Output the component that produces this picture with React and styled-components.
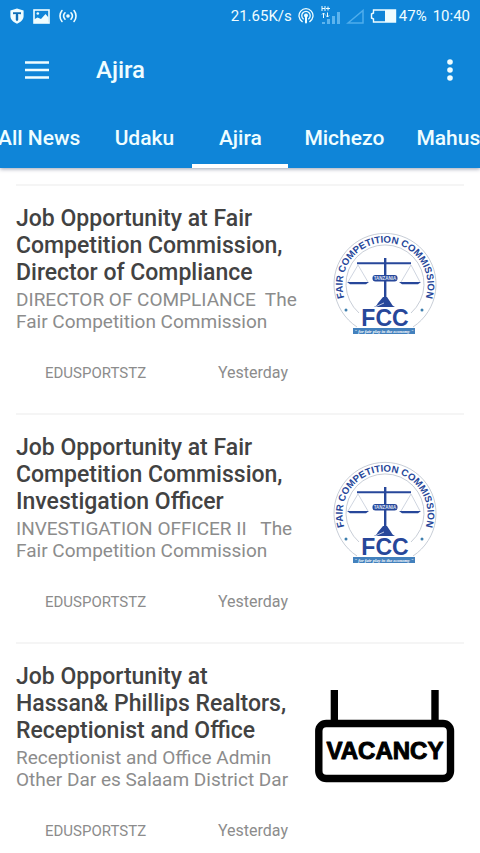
import React, { useId, useLayoutEffect, useRef, useState } from 'react';
import styled, { createGlobalStyle } from 'styled-components';

const GlobalStyle = createGlobalStyle`
  *, *::before, *::after { box-sizing: border-box; }
  body {
    margin: 0;
    background: #fff;
    font-family: Roboto, 'Noto Sans', sans-serif;
  }
  button { font: inherit; }
`;

const Screen = styled.div`
  display: flex;
  flex-direction: column;
  height: 100vh;
  overflow: hidden;
`;

const Header = styled.header`
  flex: none;
  z-index: 1;
  background: #0f85d8;
  color: #effdff;
  box-shadow: 0 1px 4px rgba(0, 20, 60, 0.4);
`;

const StatusBar = styled.div`
  display: flex;
  justify-content: space-between;
  align-items: center;
  height: 32px;
  padding: 0 10px;
  font-size: 15px;
  line-height: 18px;
`;

const StatusGroup = styled.div`
  display: flex;
  align-items: center;
  gap: ${(p) => p.$gap}px;
`;

const Glyph = styled.svg`
  display: block;
  flex: none;
`;

const Toolbar = styled.div`
  display: flex;
  align-items: center;
  height: 76px;
  padding: 0 14px 0 21px;
`;

const IconButton = styled.button`
  display: grid;
  place-items: center;
  width: 32px;
  height: 40px;
  padding: 0;
  border: 0;
  background: none;
  color: inherit;
  cursor: pointer;
`;

const AppTitle = styled.h1`
  flex: 1;
  margin: 0 0 0 43px;
  font-size: 24px;
  font-weight: 500;
  line-height: 32px;
`;

const TabStrip = styled.nav`
  position: relative;
  display: flex;
  height: 60px;
  overflow-x: auto;
  scrollbar-width: none;
`;

const Tab = styled.button`
  flex: none;
  min-width: 96px;
  padding: 4px 16px 0;
  border: 0;
  border-bottom: 4px solid ${(p) => (p.$active ? '#fff' : 'transparent')};
  background: none;
  color: inherit;
  font-size: 21px;
  font-weight: 500;
  line-height: 28px;
  cursor: pointer;
`;

const Feed = styled.main`
  flex: 1;
  min-height: 0;
  padding: 16px 16px 0;
  overflow-y: auto;
  scrollbar-width: none;
`;

const Story = styled.article`
  display: flex;
  justify-content: space-between;
  height: 229px;
  padding-top: 19px;
  border-top: 2px solid #f5f5f5;
`;

const StoryText = styled.div`
  width: 280px;
`;

const StoryTitle = styled.h2`
  margin: 0;
  color: #424242;
  font-size: 23px;
  font-weight: 500;
  line-height: 27px;
  white-space: pre-line;
`;

const Summary = styled.p`
  margin: 3px 0 0;
  color: #8c8c8c;
  font-size: 19px;
  line-height: 22px;
  white-space: pre;
`;

const Meta = styled.div`
  display: flex;
  justify-content: space-between;
  align-items: center;
  margin-top: 30px;
  padding: 0 8px 0 29px;
  color: #8c8c8c;
  line-height: 20px;
`;

const Source = styled.span`
  font-size: 15px;
`;

const When = styled.time`
  font-size: 16px;
`;

const Thumb = styled.svg`
  display: block;
  flex: none;
  width: 144px;
  height: 106px;
  margin: 26px 8px 0 0;
  overflow: visible;
`;

const ShieldIcon = () => (
  <Glyph width="14" height="16" viewBox="0 0 14 16" aria-hidden="true">
    <path d="M7 .5 13.6 2.600V8c0 3.600-2.600 6-6.600 7.700C3 14 .4 11.600.4 8V2.600Z" fill="currentColor" />
    <path d="M3 4.300h8v1.900L8.200 6v6L7 13.200 5.800 12V6L3 6.200Z" fill="#0f6fb8" />
  </Glyph>
);

const PictureIcon = () => (
  <Glyph width="17" height="15" viewBox="0 0 17 15" aria-hidden="true">
    <rect x="1" y="1" width="15" height="13" fill="none" stroke="currentColor" strokeWidth="1.600" />
    <path d="M1 10.500 4.500 8.500l3.500 1.500 4.500-5 3 3.500V14H1Z" fill="currentColor" />
    <circle cx="4.800" cy="4.500" r="1.300" fill="currentColor" />
  </Glyph>
);

const BroadcastIcon = () => (
  <Glyph width="18" height="14" viewBox="0 0 18 14" fill="none" stroke="currentColor" strokeWidth="1.600" strokeLinecap="round" aria-hidden="true">
    <circle cx="9" cy="7" r="1" fill="currentColor" />
    <path d="M6 3.800a4.800 4.800 0 0 0 0 6.400M12 3.800a4.800 4.800 0 0 1 0 6.400M3 1.500a8.500 8.500 0 0 0 0 11M15 1.500a8.500 8.500 0 0 1 0 11" />
  </Glyph>
);

const HotspotIcon = () => (
  <Glyph width="16" height="16" viewBox="0 0 16 16" fill="none" stroke="currentColor" strokeWidth="1.300" strokeLinecap="round" aria-hidden="true">
    <path d="M4.200 13.600a7 7 0 1 1 7.600 0M5.400 10.900a4.200 4.200 0 1 1 5.200 0" />
    <circle cx="8" cy="7.500" r="1.300" fill="currentColor" />
    <path d="M8 8v6.500" strokeWidth="2" />
  </Glyph>
);

const SignalIcon = () => (
  <Glyph width="20" height="20" viewBox="0 0 20 20" aria-hidden="true">
    <g fill="#5db4ee">
      <rect x="2" y="16" width="3" height="2" />
      <rect x="7" y="13" width="3" height="5" />
      <rect x="12" y="10" width="3" height="8" />
      <rect x="17" y="6" width="3" height="12" />
    </g>
    <path d="M2 0v5M5 0v5M2 2.500h3M6 2.500h4M8 .5v4M3.500 7v5M2 8.500 3.500 7 5 8.500M7.500 6.500v4.500M6 9.500 7.500 11 9 9.500" fill="none" stroke="currentColor" strokeWidth="1" />
  </Glyph>
);

const EmptySignalIcon = () => (
  <Glyph width="18" height="15" viewBox="0 0 18 15" fill="none" stroke="#4fadec" strokeWidth="1.500" aria-hidden="true">
    <path d="M2 14 17 1.500V14Z" />
  </Glyph>
);

const BatteryIcon = () => (
  <Glyph width="27" height="14" viewBox="0 0 27 14" aria-hidden="true">
    <path d="M3.500 1h22v12h-22V10L1.500 9V5l2-1Z" fill="none" stroke="currentColor" strokeWidth="1.400" />
    <path d="M15 1h11v12H15Z" fill="currentColor" />
  </Glyph>
);

const MenuIcon = () => (
  <Glyph width="24" height="18" viewBox="0 0 24 18" aria-hidden="true">
    <path d="M0 1.500h24M0 9h24M0 16.500h24" stroke="currentColor" strokeWidth="2.600" />
  </Glyph>
);

const MoreIcon = () => (
  <Glyph width="6" height="22" viewBox="0 0 6 22" fill="currentColor" aria-hidden="true">
    <circle cx="3" cy="3" r="2.800" />
    <circle cx="3" cy="11" r="2.800" />
    <circle cx="3" cy="19" r="2.800" />
  </Glyph>
);

function FccLogo() {
  const arc = useId();
  return (
    <Thumb viewBox="0 0 144 106" role="img" aria-label="Fair Competition Commission">
      <g fill="none" stroke="#b9c0cc" strokeWidth="0.800">
        <path d="M45 96A51 51 0 1 1 101 96" />
        <path d="M47 82A39 39 0 1 1 99 82" />
      </g>
      <path id={arc} d="M35 73.200A42.500 42.500 0 1 1 111 73.200" fill="none" />
      <text fill="#27479a" fontFamily="Liberation Sans, Arial, sans-serif" fontSize="9.700" fontWeight="700">
        <textPath href={`#${arc}`} startOffset="50%" textAnchor="middle">FAIR COMPETITION COMMISSION</textPath>
      </text>
      <path d="M46 34 36 51M46 34 56 51M99 34 89 51M99 34 108 51" stroke="#c3cad8" strokeWidth="0.800" />
      <g fill="#27479a">
        <path d="M45 31.300h54v2H45ZM72 27h2.400v42H72ZM35 51h22l-3 2.300H38ZM87 51h22l-3 2.300H90Z" />
        <path d="M62 76c2-1 3-2 4-4l5-6h4l4 6c1 2 2 3 4 4Z" />
        <rect x="60.500" y="44" width="25" height="6.500" rx="3" />
        <text x="73" y="95" textAnchor="middle" fontFamily="Liberation Sans, Arial, sans-serif" fontSize="23" fontWeight="700">FCC</text>
      </g>
      <text x="73" y="49" fill="#dfe6f5" textAnchor="middle" fontFamily="Liberation Sans, Arial, sans-serif" fontSize="4.500" fontWeight="700">TANZANIA</text>
      <path d="m63 76 9-4" stroke="#fff" strokeWidth="0.700" />
      <rect x="41" y="97" width="62" height="6" fill="#4381bd" />
      <text x="72" y="101.500" fill="#fff" textAnchor="middle" fontFamily="Liberation Serif, serif" fontStyle="italic" fontWeight="700" fontSize="4.500">" for fair play in the economy "</text>
      <circle cx="34" cy="79" r="1.500" fill="#3f7fae" />
      <circle cx="110" cy="79" r="1.500" fill="#3f7fae" />
    </Thumb>
  );
}

const VacancySign = () => (
  <Thumb viewBox="0 0 144 106" role="img" aria-label="Vacancy">
    <path d="M18.700 1H26v32h-7.300ZM119.300 1h7.400v32h-7.400Z" />
    <rect x="6.800" y="34.500" width="131.700" height="55" rx="7.500" fill="none" stroke="#000" strokeWidth="7.400" />
    <text x="73" y="70" textAnchor="middle" stroke="#000" strokeWidth="1" strokeLinejoin="round" fontFamily="Liberation Sans, Arial, sans-serif" fontSize="24" fontWeight="700">VACANCY</text>
  </Thumb>
);

const TABS = ['All News', 'Udaku', 'Ajira', 'Michezo', 'Mahus'];

const STORIES = [
  {
    title: 'Job Opportunity at Fair\nCompetition Commission,\nDirector of Compliance',
    summary: 'DIRECTOR OF COMPLIANCE  The\nFair Competition Commission',
    Art: FccLogo,
  },
  {
    title: 'Job Opportunity at Fair\nCompetition Commission,\nInvestigation Officer',
    summary: 'INVESTIGATION OFFICER II   The\nFair Competition Commission',
    Art: FccLogo,
  },
  {
    title: 'Job Opportunity at\nHassan& Phillips Realtors,\nReceptionist and Office',
    summary: 'Receptionist and Office Admin\nOther Dar es Salaam District Dar',
    Art: VacancySign,
  },
];

export default function App() {
  const [active, setActive] = useState('Ajira');
  const strip = useRef(null);

  // Keep the selected tab in the middle of the strip.
  useLayoutEffect(() => {
    const tab = strip.current.querySelector('[aria-current="page"]');
    strip.current.scrollLeft = tab.offsetLeft - (strip.current.clientWidth - tab.offsetWidth) / 2;
  }, [active]);

  return (
    <Screen>
      <GlobalStyle />
      <Header>
        <StatusBar>
          <StatusGroup $gap={9}>
            <ShieldIcon />
            <PictureIcon />
            <BroadcastIcon />
          </StatusGroup>
          <StatusGroup $gap={6}>
            <span>21.65K/s</span>
            <HotspotIcon />
            <SignalIcon />
            <EmptySignalIcon />
            <StatusGroup $gap={2}>
              <BatteryIcon />
              <span>47%</span>
            </StatusGroup>
            <span>10:40</span>
          </StatusGroup>
        </StatusBar>
        <Toolbar>
          <IconButton type="button" aria-label="Open menu"><MenuIcon /></IconButton>
          <AppTitle>Ajira</AppTitle>
          <IconButton type="button" aria-label="More options"><MoreIcon /></IconButton>
        </Toolbar>
        <TabStrip ref={strip}>
          {TABS.map((name) => (
            <Tab
              key={name}
              type="button"
              $active={name === active}
              aria-current={name === active ? 'page' : undefined}
              onClick={() => setActive(name)}
            >
              {name}
            </Tab>
          ))}
        </TabStrip>
      </Header>
      <Feed>
        {STORIES.map(({ title, summary, Art }) => (
          <Story key={title}>
            <StoryText>
              <StoryTitle>{title}</StoryTitle>
              <Summary>{summary}</Summary>
              <Meta>
                <Source>EDUSPORTSTZ</Source>
                <When>Yesterday</When>
              </Meta>
            </StoryText>
            <Art />
          </Story>
        ))}
      </Feed>
    </Screen>
  );
}
